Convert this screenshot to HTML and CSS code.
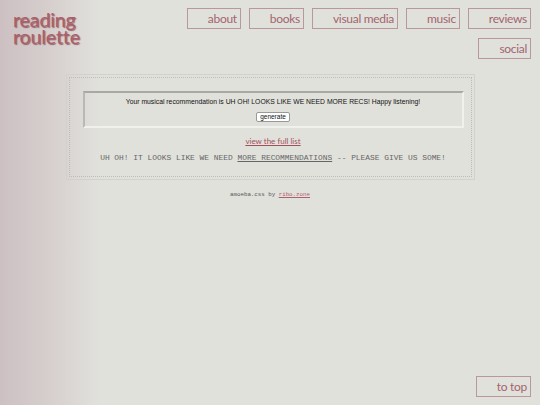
FILE: index.html
```html
<!DOCTYPE html>
<html>
<head>
<meta charset="utf-8">
<link rel="stylesheet" href="styles.css">
</head>
<body>
<header class="top">
  <div class="logo"><span class="logo-line">reading</span><span class="logo-line">roulette</span></div>
  <nav class="nav">
    <a class="btn" href="#">about</a>
    <a class="btn" href="#">books</a>
    <a class="btn" href="#">visual media</a>
    <a class="btn" href="#">music</a>
    <a class="btn" href="#">reviews</a>
    <a class="btn" href="#">social</a>
  </nav>
</header>
<main class="panel">
  <div class="panel-inner">
    <div class="rec">
      <p class="rec-text">Your musical recommendation is UH OH! LOOKS LIKE WE NEED MORE RECS! Happy listening!</p>
      <button class="gen">generate</button>
    </div>
    <a class="full" href="#">view the full list</a>
    <p class="mono">UH OH! IT LOOKS LIKE WE NEED <u>MORE RECOMMENDATIONS</u> -- PLEASE GIVE US SOME!</p>
  </div>
</main>
<footer class="foot">amoeba.css by <a href="#">ribo.zone</a></footer>
<a class="btn totop" href="#">to top</a>
</body>
</html>
```
FILE: styles.css
```css
html, body { margin: 0; padding: 0; }
body {
  width: 540px;
  height: 405px;
  overflow: hidden;
  background: linear-gradient(to right, #cdc0c2 0px, #d6cfce 50px, #e1e1dc 100px, #e1e1dc 100%);
  font-family: "Lato", "DejaVu Sans", sans-serif;
  position: relative;
}
.top {
  display: flex;
  justify-content: space-between;
  align-items: flex-start;
  padding: 8px 9px 0 13px;
}
.logo {
  padding-top: 3px;
  color: #a9606a;
  text-shadow: 1px 1px 1px rgba(130,60,72,0.75);
  letter-spacing: -0.1px;
}
.logo-line {
  display: block;
  font-size: 19.5px;
  line-height: 17px;
}
.nav {
  width: 358px;
  display: flex;
  flex-wrap: wrap;
  justify-content: flex-end;
  column-gap: 8px;
  row-gap: 9px;
}
.btn {
  display: block;
  border: 1px solid #ba979c;
  color: #a4646e;
  text-decoration: none;
  font-size: 12px;
  letter-spacing: -0.3px;
  line-height: 18px;
  padding: 1px 3px 0 20px;
  text-align: right;
}
.panel {
  width: 403px;
  margin: 15px auto 0;
  border: 1px solid #d2d2cc;
  padding: 2px;
}
.panel-inner {
  border: 1px dotted #bdbdb6;
  padding: 13px 7px 13px 13px;
  text-align: center;
}
.rec {
  border: 2px solid #c8c8c2;
  border-top-color: #a8a8a4;
  border-left-color: #b8b8b4;
  border-right-color: #f0f0ec;
  border-bottom-color: #f0f0ec;
  padding: 4px 0 4px;
}
.rec-text {
  margin: 0;
  font-family: "Liberation Sans", Arial, sans-serif;
  font-size: 6.8px;
  line-height: 10px;
  color: #111;
}
.gen {
  display: block;
  margin: 5px auto 0;
  height: 10px;
  box-sizing: border-box;
  font-family: "Liberation Sans", Arial, sans-serif;
  font-size: 6.5px;
  line-height: 8px;
  padding: 0 3px;
  background: #fff;
  border: 1px solid #999;
  border-radius: 2px;
  color: #111;
}
.full {
  display: inline-block;
  margin-top: 7px;
  font-size: 8px;
  line-height: 10px;
  color: #a4505c;
}
.mono {
  margin: 5px 0 0;
  font-family: "Liberation Mono", "Courier New", monospace;
  font-size: 7.9px;
  line-height: 11px;
  color: #666;
}
.foot {
  margin-top: 11px;
  text-align: center;
  font-family: "Liberation Mono", monospace;
  font-size: 5.8px;
  color: #555;
}
.foot a { color: #b0606c; }
.totop {
  position: absolute;
  right: 9px;
  bottom: 8px;
}
```
